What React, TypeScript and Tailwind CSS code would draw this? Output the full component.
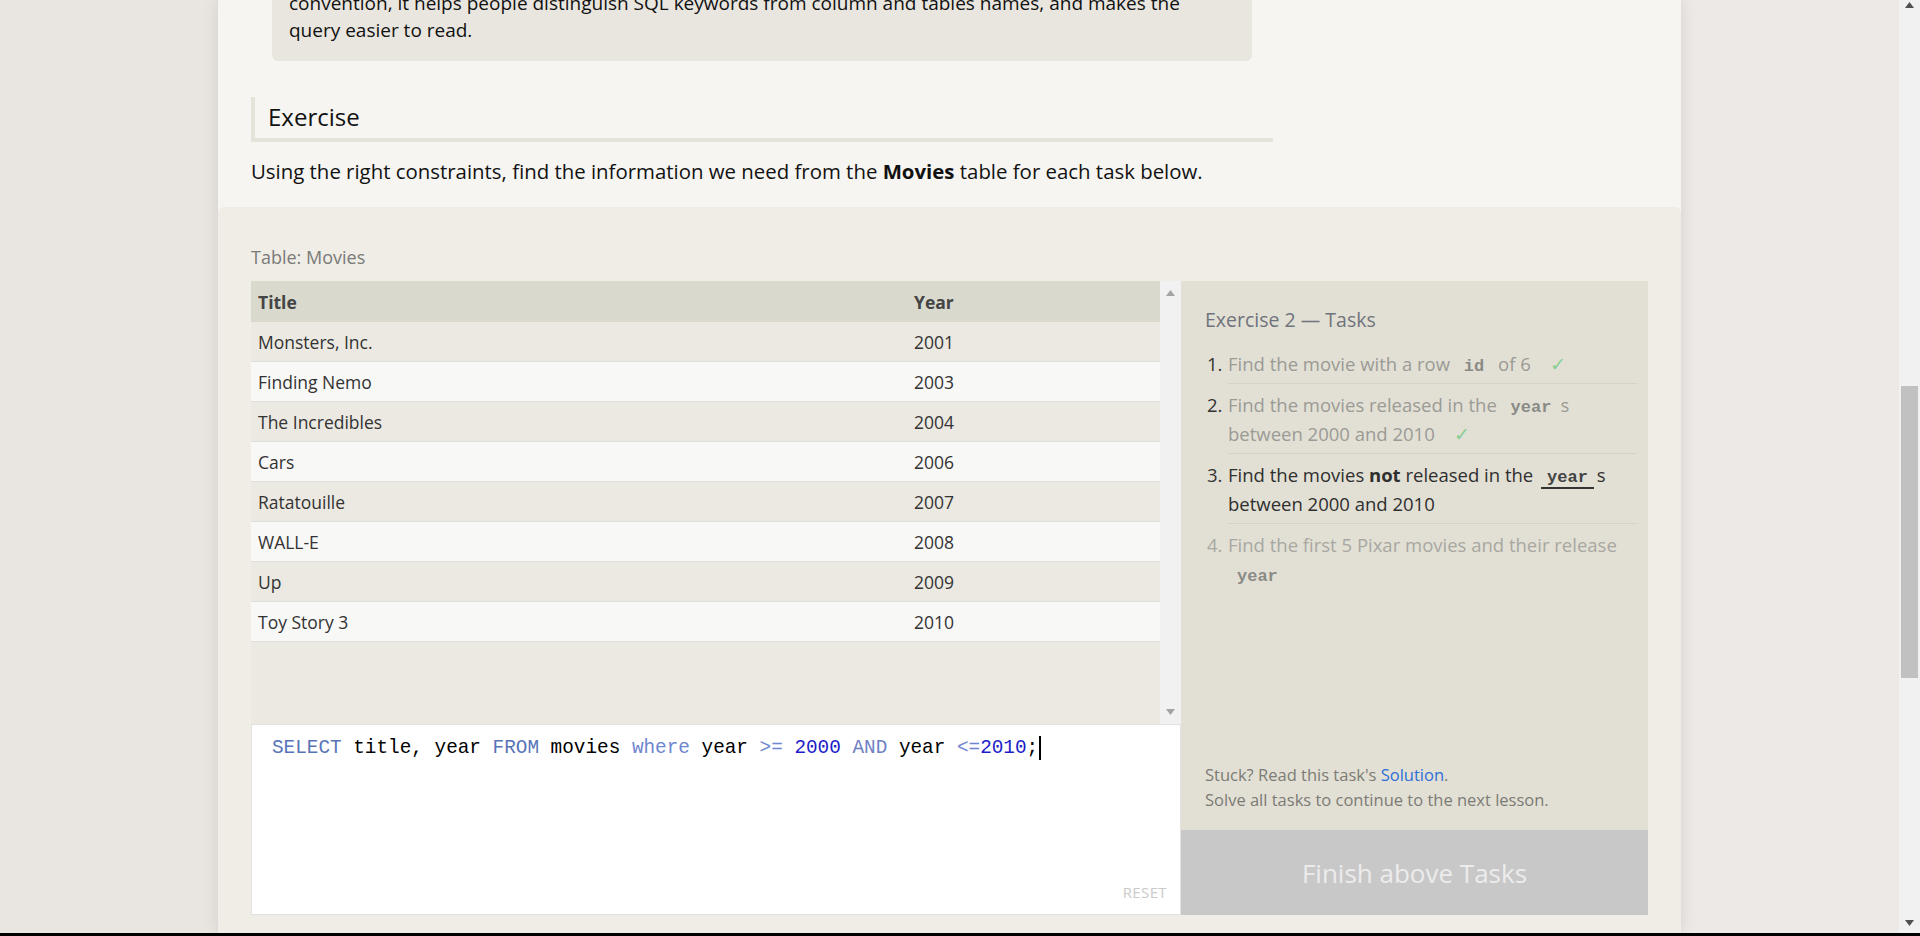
import React from "react";

const sans = { fontFamily: '"Open Sans", "Noto Sans", sans-serif' };
const mono = { fontFamily: '"Liberation Mono", "DejaVu Sans Mono", monospace' };

const movies: [string, string][] = [
  ["Monsters, Inc.", "2001"],
  ["Finding Nemo", "2003"],
  ["The Incredibles", "2004"],
  ["Cars", "2006"],
  ["Ratatouille", "2007"],
  ["WALL-E", "2008"],
  ["Up", "2009"],
  ["Toy Story 3", "2010"],
];

// query tokens: [text, colour]
const query: [string, string][] = [
  ["SELECT", "#5874b8"],
  [" title, year ", "#000"],
  ["FROM", "#5874b8"],
  [" movies ", "#000"],
  ["where", "#6f86d0"],
  [" year ", "#000"],
  [">=", "#6f86d0"],
  [" ", "#000"],
  ["2000", "#1c1cc8"],
  [" ", "#000"],
  ["AND", "#6f80c4"],
  [" year ", "#000"],
  ["<=", "#6f86d0"],
  ["2010", "#1c1cc8"],
  [";", "#000"],
];

function Arrow({ up, color }: { up?: boolean; color: string }) {
  return (
    <svg width="9" height="6" viewBox="0 0 9 6">
      {up ? <path d="M4.5 0 L9 6 L0 6 Z" fill={color} /> : <path d="M0 0 L9 0 L4.5 6 Z" fill={color} />}
    </svg>
  );
}

function Code({ children, active }: { children: React.ReactNode; active?: boolean }) {
  return (
    <span
      style={mono}
      className={
        "mx-[3px] px-[6px] text-[17px] leading-[18px] font-bold " +
        (active ? "border-b-2 border-[#333] text-[#444]" : "text-[#8a8a86]")
      }
    >
      {children}
    </span>
  );
}

function Check() {
  return <span className="ml-[14px] text-[#86cf94]">✓</span>;
}

function Task({ n, done, todo, last, children }: { n: number; done?: boolean; todo?: boolean; last?: boolean; children: React.ReactNode }) {
  return (
    <li className="flex">
      <span className={"w-[21px] shrink-0 pt-[6px] leading-[29px] " + (todo ? "text-[#a8a7a2]" : "text-[#333]")}>{n}.</span>
      <div
        className={
          "flex-1 pt-[6px] pb-[5px] leading-[29px] " +
          (last ? "" : "border-b border-[#d5d3c7] ") +
          (done ? "text-[#9b9a96]" : todo ? "text-[#a8a7a2]" : "text-[#2f2f2f]")
        }
      >
        {children}
      </div>
    </li>
  );
}

export default function App() {
  return (
    <div style={sans} className="flex h-[936px] w-[1920px] flex-col overflow-hidden">
      <div className="flex h-[933px]">
        <div className="w-[218px] bg-[#e9e6e2]" />

        <main className="relative z-10 flex w-[1463px] flex-col bg-[#f6f5f1] shadow-[0_0_16px_rgba(0,0,0,0.10)]">
          <section className="h-[207px] px-[33px]">
            <div className="-mt-[26px] ml-[21px] w-[980px] rounded-[6px] bg-[#e9e6df] pt-[16px] pb-[17px] pl-[17px] text-[19px] leading-[27px] text-[#111]">
              <p>convention, it helps people distinguish SQL keywords from column and tables names, and makes the</p>
              <p>query easier to read.</p>
            </div>
            <h2 className="mt-[36px] flex h-[45px] w-[1022px] items-center border-b-4 border-l-4 border-[#e6e4da] pb-[2px] pl-[13px] text-[24px] text-[#111]">
              Exercise
            </h2>
            <p className="mt-[15px] text-[20.4px] leading-[28px] text-[#111]">
              Using the right constraints, find the information we need from the <b>Movies</b> table for each task below.
            </p>
          </section>

          <section className="flex-1 rounded-t-[6px] bg-[#efede6] px-[33px] pt-[38px]">
            <div className="text-[18px] leading-[24px] text-[#7a7a78]">Table: Movies</div>
            <div className="mt-[12px] flex">
              <div className="w-[930px]">
                <div className="flex h-[443px]">
                  <div className="w-[909px] bg-[#ebe9e2] text-[17.5px] text-[#333]">
                    <div className="grid h-[41px] grid-cols-[656px_1fr] items-center bg-[#dad9cd] px-[7px] pt-[2px] font-bold text-[#444]">
                      <span>Title</span>
                      <span>Year</span>
                    </div>
                    {movies.map(([title, year], i) => (
                      <div
                        key={title}
                        className={
                          "grid h-[40px] grid-cols-[656px_1fr] items-center border-b border-[#dfded8] px-[7px] pt-[1px] " +
                          (i % 2 === 0 ? "bg-[#ebe9e2]" : "bg-[#f8f8f7]")
                        }
                      >
                        <span>{title}</span>
                        <span>{year}</span>
                      </div>
                    ))}
                  </div>
                  <div className="flex w-[21px] flex-col items-center justify-between bg-[#f1f1f1] pt-[9px] pb-[9px]">
                    <Arrow up color="#a3a3a3" />
                    <Arrow color="#a3a3a3" />
                  </div>
                </div>
                <div className="relative h-[191px] border border-[#e2e2e0] bg-white pt-[10px] pl-[20px]">
                  <div style={mono} className="flex items-center text-[19.35px] leading-[26px] whitespace-pre">
                    {query.map(([t, c], i) => (
                      <span key={i} style={{ color: c }}>
                        {t}
                      </span>
                    ))}
                    <span className="ml-[1px] inline-block h-[24px] w-[2px] bg-black" />
                  </div>
                  <span className="absolute right-[13px] bottom-[11px] text-[15px] tracking-wide text-[#cacaca]">RESET</span>
                </div>
              </div>

              <div className="flex w-[467px] flex-col">
                <div className="flex h-[549px] flex-col justify-between bg-[#e2e0d4] pt-[25px] pr-[11px] pl-[24px] pb-[18px]">
                  <div>
                    <h3 className="text-[19.5px] leading-[28px] text-[#70737c]">Exercise 2 — Tasks</h3>
                    <ol className="mt-[9px] pl-[2px] text-[18.5px]">
                      <Task n={1} done>
                        Find the movie with a row <Code>id</Code> of 6 <Check />
                      </Task>
                      <Task n={2} done>
                        Find the movies released in the <Code>year</Code>s between 2000 and 2010 <Check />
                      </Task>
                      <Task n={3}>
                        Find the movies <b>not</b> released in the <Code active>year</Code>s between 2000 and 2010
                      </Task>
                      <Task n={4} todo last>
                        Find the first 5 Pixar movies and their release <Code>year</Code>
                      </Task>
                    </ol>
                  </div>
                  <div className="text-[16.5px] leading-[25px] text-[#7c7b76]">
                    <p>
                      Stuck? Read this task's <span className="text-[#2f6fd8]">Solution</span>.
                    </p>
                    <p>Solve all tasks to continue to the next lesson.</p>
                  </div>
                </div>
                <button className="flex h-[85px] items-center justify-center bg-[#c8c8c8] pt-[2px] text-[26px] text-[#ececec]">
                  Finish above Tasks
                </button>
              </div>
            </div>
          </section>
        </main>

        <div className="w-[218px] bg-[#ede9e6]" />

        <div className="flex w-[21px] flex-col items-center bg-[#f1f1f1]">
          <div className="pt-[2px]">
            <Arrow up color="#505050" />
          </div>
          <div className="mt-[378px] h-[292px] w-[17px] bg-[#c1c1c1]" />
          <div className="mt-auto pb-[7px]">
            <Arrow color="#505050" />
          </div>
        </div>
      </div>
      <div className="h-[3px] bg-black" />
    </div>
  );
}
